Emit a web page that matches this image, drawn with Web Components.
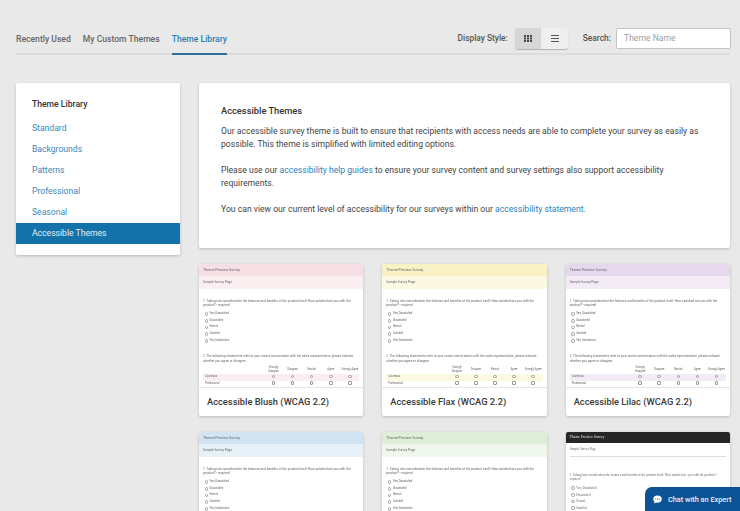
<!DOCTYPE html>
<html lang="en">
<head>
<meta charset="utf-8">
<title>Theme Library</title>
<style>
    html, body { margin: 0; height: 100%; overflow: hidden; }
    body { background: #e9e9e9; font-family: Roboto, "Liberation Sans", sans-serif; color: #333; }
</style>
</head>
<body>
<theme-page>
    <theme-toolbar slot="top"></theme-toolbar>
    <side-nav slot="side"></side-nav>
    <intro-panel slot="main"></intro-panel>
    <theme-card slot="main" name="Accessible Blush (WCAG 2.2)" head="#f6dfe5" band="#fbeef1"></theme-card>
    <theme-card slot="main" name="Accessible Flax (WCAG 2.2)" head="#f8f2c4" band="#fcf9e2"></theme-card>
    <theme-card slot="main" name="Accessible Lilac (WCAG 2.2)" head="#e6d9ee" band="#f3ecf7"></theme-card>
    <theme-card slot="main" name="Accessible Sky (WCAG 2.2)" head="#d2e4f2" band="#e7f1f8"></theme-card>
    <theme-card slot="main" name="Accessible Sage (WCAG 2.2)" head="#dfeed8" band="#f0f7ec"></theme-card>
    <theme-card slot="main" name="Accessible Mono (WCAG 2.2)" head="#262626" band="#fff" dark></theme-card>
</theme-page>
<chat-button></chat-button>

<script>
class ThemePage extends HTMLElement {
    constructor() {
        super();
        this.attachShadow({ mode: 'open' });
        this.shadowRoot.innerHTML = `
            <style>
                :host { display: block; padding: 0 10px 0 16px; }
                .top { display: block; }
                .cols {
                    display: grid;
                    grid-template-columns: 164px 1fr;
                    column-gap: 19px;
                    margin-top: 28px;
                    align-items: start;
                }
                .cards {
                    display: grid;
                    grid-template-columns: repeat(3, 1fr);
                    gap: 16px 19px;
                }
                ::slotted(intro-panel) { grid-column: 1 / -1; }
            </style>
            <div class="top"><slot name="top"></slot></div>
            <div class="cols">
                <div><slot name="side"></slot></div>
                <div class="cards"><slot name="main"></slot></div>
            </div>
        `;
    }
}

class ThemeToolbar extends HTMLElement {
    constructor() {
        super();
        this.attachShadow({ mode: 'open' });
        this.shadowRoot.innerHTML = `
            <style>
                :host {
                    display: flex;
                    justify-content: space-between;
                    height: 55px;
                    box-sizing: border-box;
                    border-bottom: 2px solid #dcdcdc;
                }
                .tabs { display: flex; gap: 12px; align-items: flex-end; }
                .tab {
                    font-weight: 500;
                    color: #666;
                    height: 25px;
                    margin-bottom: -2px;
                    font-size: 8.6px;
                    line-height: 18px;
                    box-sizing: border-box;
                }
                .tab.on { color: #2a7fae; border-bottom: 2px solid #2d6f9b; }
                .tools { display: flex; align-items: center; padding-top: 28px; height: 21px; }
                .label { color: #555; font-size: 8.4px; font-weight: 500; margin-top: -1px; }
                .group {
                    display: flex;
                    margin: 0 15px 0 7px;
                    height: 21px;
                    border-radius: 3px;
                    overflow: hidden;
                    box-shadow: 0 1px 1px rgba(0,0,0,.25);
                }
                .btn { width: 26.5px; display: flex; align-items: center; justify-content: center; background: #efefef; }
                .btn.on { background: #d6d6d6; }
                input {
                    width: 115px;
                    height: 21px;
                    box-sizing: border-box;
                    margin-left: 5px;
                    margin-right: -1px;
                    padding: 0 7px 1px;
                    border: 1px solid #c4c4c4;
                    border-radius: 2px;
                    background: #fff;
                    font: 8.6px Roboto, sans-serif;
                }
                input::placeholder { color: #a0a0a0; opacity: 1; }
            </style>
            <div class="tabs">
                <div class="tab">Recently Used</div>
                <div class="tab">My Custom Themes</div>
                <div class="tab on">Theme Library</div>
            </div>
            <div class="tools">
                <span class="label">Display Style:</span>
                <div class="group">
                    <div class="btn on">
                        <svg width="8" height="7" viewBox="0 0 8 7" fill="#444">
                            <path d="M0 0h2v2H0zM3 0h2v2H3zM6 0h2v2H6zM0 2.5h2v2H0zM3 2.5h2v2H3zM6 2.5h2v2H6zM0 5h2v2H0zM3 5h2v2H3zM6 5h2v2H6z"/>
                        </svg>
                    </div>
                    <div class="btn">
                        <svg width="8" height="7" viewBox="0 0 8 7" fill="#555">
                            <path d="M0 0h8v1H0zM0 3h8v1H0zM0 6h8v1H0z"/>
                        </svg>
                    </div>
                </div>
                <span class="label">Search:</span>
                <input placeholder="Theme Name">
            </div>
        `;
    }
}

class SideNav extends HTMLElement {
    constructor() {
        super();
        this.attachShadow({ mode: 'open' });
        const items = ['Standard', 'Backgrounds', 'Patterns', 'Professional', 'Seasonal', 'Accessible Themes'];
        this.shadowRoot.innerHTML = `
            <style>
                :host {
                    display: block;
                    background: #fff;
                    border-radius: 2px;
                    box-shadow: 0 1px 3px rgba(0,0,0,.2);
                    padding: 15px 0 11px;
                    font-size: 8.6px;
                }
                h3 { margin: 0 16px 8px; font-size: 8.6px; font-weight: 500; line-height: 12px; color: #333; }
                div { height: 21px; line-height: 21px; padding: 0 16px; color: #3a87b8; }
                div.on { background: #1272a9; color: #e6f0f6; }
            </style>
            <h3>Theme Library</h3>
            ${items.map(item => `<div class="${item === 'Accessible Themes' ? 'on' : ''}">${item}</div>`).join('')}
        `;
    }
}

class IntroPanel extends HTMLElement {
    constructor() {
        super();
        this.attachShadow({ mode: 'open' });
        this.shadowRoot.innerHTML = `
            <style>
                :host {
                    display: block;
                    height: 165px;
                    box-sizing: border-box;
                    background: #fff;
                    border-radius: 2px;
                    box-shadow: 0 1px 3px rgba(0,0,0,.2);
                    padding: 21px 22px 0;
                    font-size: 8.62px;
                    line-height: 13px;
                    color: #444;
                }
                h3 { margin: 0 0 8px; font-size: 9.3px; font-weight: 500; line-height: 13px; color: #333; }
                p { margin: 0 0 13px; }
                a { color: #2a83b8; text-decoration: none; }
            </style>
            <h3>Accessible Themes</h3>
            <p>Our accessible survey theme is built to ensure that recipients with access needs are able to complete your survey as easily as possible. This theme is simplified with limited editing options.</p>
            <p>Please use our <a href="#">accessibility help guides</a> to ensure your survey content and survey settings also support accessibility requirements.</p>
            <p>You can view our current level of accessibility for our surveys within our <a href="#">accessibility statement.</a></p>
        `;
    }
}

class ThemeCard extends HTMLElement {
    static get observedAttributes() {
        return ['name', 'head', 'band'];
    }

    constructor() {
        super();
        this.attachShadow({ mode: 'open' });
    }

    connectedCallback() {
        this.render();
    }

    attributeChangedCallback(name, oldValue, newValue) {
        if (oldValue !== newValue) {
            this.render();
        }
    }

    render() {
        const head = this.getAttribute('head');
        const band = this.getAttribute('band');
        const dark = this.hasAttribute('dark');
        const answers = ['Very Dissatisfied', 'Dissatisfied', 'Neutral', 'Satisfied', 'Very Satisfaction'];
        const scale = ['Strongly Disagree', 'Disagree', 'Neutral', 'Agree', 'Strongly Agree'];
        const radios = scale.map(() => '<td><i></i></td>').join('');
        const boxes = scale.map(() => '<td><i class="box"></i></td>').join('');
        this.shadowRoot.innerHTML = `
            <style>
                :host {
                    display: block;
                    background: #fff;
                    border-radius: 2px;
                    box-shadow: 0 1px 3px rgba(0,0,0,.2);
                    overflow: hidden;
                }
                .preview {
                    height: 124px;
                    box-sizing: border-box;
                    overflow: hidden;
                    border-bottom: 1px solid #e6e6e6;
                    font: 3.2px/4.4px ${dark ? '"Liberation Serif", serif' : 'Roboto, sans-serif'};
                    color: #666;
                    filter: blur(.3px);
                }
                .head {
                    height: ${dark ? 11 : 12}px;
                    line-height: ${dark ? 11 : 12}px;
                    padding: 0 4px;
                    font-size: 3.7px;
                    background: ${head};
                    color: ${dark ? '#eee' : '#666'};
                }
                .band {
                    height: ${dark ? 14 : 13}px;
                    line-height: 13px;
                    padding: 0 4px;
                    background: ${band};
                    ${dark ? 'border-bottom: 1px solid #ddd; margin: 0 4px; padding: 0; box-sizing: border-box;' : ''}
                }
                .q { margin: ${dark ? 16 : 10}px 10px 0 4px; }
                .a { display: flex; align-items: center; height: 6.7px; margin-left: 5.5px; gap: 1.5px; font-size: ${dark ? 3 : 2.6}px; }
                .q + .a { margin-top: 3px; }
                i { display: inline-block; width: 3.6px; height: 3.6px; border: .5px solid #999; border-radius: 50%; box-sizing: border-box; }
                i.box { border-radius: 1px; }
                table { border-collapse: collapse; margin: 3px 4px 0 4px; width: calc(100% - 8px); table-layout: fixed; font-size: 2.6px; }
                td, th { padding: 0; font-weight: 400; text-align: center; height: 6.5px; line-height: 4px; }
                td:first-child, th:first-child { width: 61px; text-align: left; padding-left: 2px; box-sizing: border-box; }
                tr.tint td { background: ${band === '#fff' ? '#f4f4f4' : band}; }
                .name { height: 28px; line-height: 27px; padding: 0 8px; font-size: 9.3px; font-weight: 500; color: #3a3a3a; white-space: nowrap; }
            </style>
            <div class="preview">
                <div class="head">Theme Preview Survey</div>
                <div class="band">Sample Survey Page</div>
                <div class="q">1. Taking into consideration the features and benefits of the product itself: How satisfied are you with the product? - required</div>
                ${answers.map(a => `<div class="a"><i></i>${a}</div>`).join('')}
                <div class="q" style="margin-top:10px">2. The following statements refer to your recent conversation with the sales representative, please indicate whether you agree or disagree.</div>
                <table>
                    <tr><th></th>${scale.map(s => `<th>${s}</th>`).join('')}</tr>
                    <tr class="tint"><td>Courteous</td>${radios}</tr>
                    <tr><td>Professional</td>${boxes}</tr>
                </table>
            </div>
            <div class="name">${this.getAttribute('name')}</div>
        `;
    }
}

class ChatButton extends HTMLElement {
    constructor() {
        super();
        this.attachShadow({ mode: 'open' });
        this.shadowRoot.innerHTML = `
            <style>
                :host {
                    position: fixed;
                    right: 0;
                    bottom: 0;
                    width: 95px;
                    height: 24px;
                    display: flex;
                    align-items: center;
                    gap: 6px;
                    padding-left: 8px;
                    box-sizing: border-box;
                    background: #0b5394;
                    border-radius: 7px 0 0 0;
                    color: #e8eff6;
                    font-size: 7.3px;
                    font-weight: 500;
                    white-space: nowrap;
                }
            </style>
            <svg width="9" height="9" viewBox="0 0 9 9">
                <path d="M4.5 .5C2 .5 .2 2 .2 4c0 1 .5 1.9 1.2 2.5L1 8.5l2.2-1c.4.1.9.2 1.3.2 2.5 0 4.3-1.6 4.3-3.7S7 .5 4.5 .5z" fill="#fff"/>
                <circle cx="2.8" cy="4" r=".55" fill="#0b5394"/><circle cx="4.5" cy="4" r=".55" fill="#0b5394"/><circle cx="6.2" cy="4" r=".55" fill="#0b5394"/>
            </svg>
            <span>Chat with an Expert</span>
        `;
    }
}

customElements.define('theme-page', ThemePage);
customElements.define('theme-toolbar', ThemeToolbar);
customElements.define('side-nav', SideNav);
customElements.define('intro-panel', IntroPanel);
customElements.define('theme-card', ThemeCard);
customElements.define('chat-button', ChatButton);
</script>
</body>
</html>
